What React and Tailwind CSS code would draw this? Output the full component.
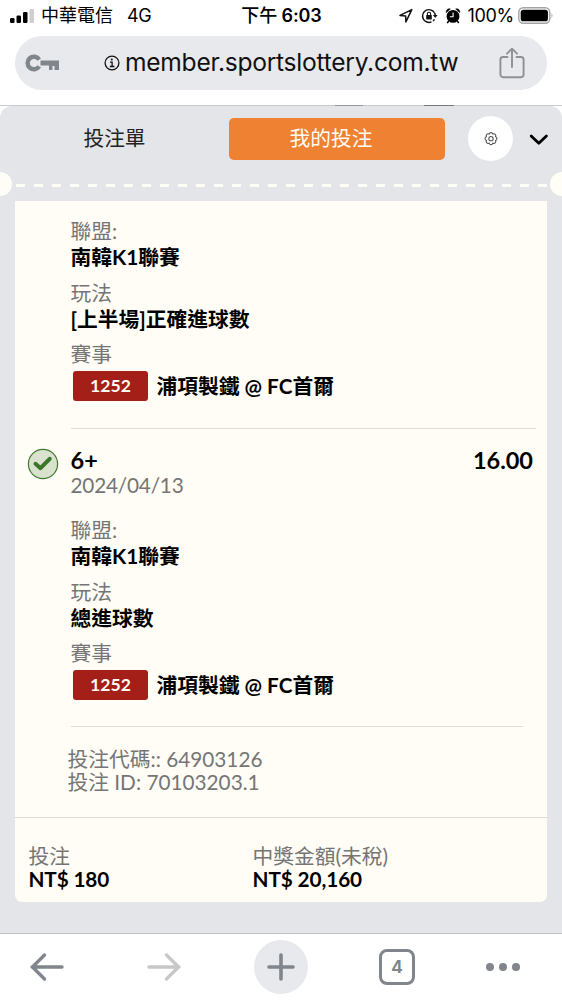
const selections = [
  { league: '南韓K1聯賽', play: '[上半場]正確進球數', code: '1252', match: '浦項製鐵 @ FC首爾' },
  {
    pick: '6+',
    odds: '16.00',
    date: '2024/04/13',
    league: '南韓K1聯賽',
    play: '總進球數',
    code: '1252',
    match: '浦項製鐵 @ FC首爾',
  },
];

function StatusBar() {
  return (
    <div className="h-9 grid grid-cols-[1fr_auto_1fr] items-start pt-[3px] pl-[9px] pr-2 text-black">
      <div className="flex items-center h-[25px]">
        <svg width="27" height="18" viewBox="0 0 27 18">
          <rect x="1" y="11" width="4.5" height="5" rx="1.2" />
          <rect x="7.5" y="8.5" width="4.5" height="7.5" rx="1.2" />
          <rect x="14" y="5" width="4.5" height="11" rx="1.2" />
          <rect x="20.5" y="2" width="4.5" height="14" rx="1.2" fill="#cfcfcf" />
        </svg>
        <span className="ml-[5px] text-[18px]">中華電信</span>
        <span className="ml-[14px] text-[18px] tracking-[-0.5px]">4G</span>
      </div>
      <div className="h-[25px] leading-[25px] text-[18px] font-semibold tracking-[-0.1px]">
        <span className="font-medium">下午</span> 6:03
      </div>
      <div className="flex items-center justify-end h-[25px]">
        <svg width="14" height="15" viewBox="0 0 14 15" fill="none" stroke="#111" strokeWidth="1.5" strokeLinejoin="round">
          <path d="M12.8 1.6 1 7.4l5.6.5.3 6z" />
        </svg>
        <svg className="ml-[8px]" width="17" height="16" viewBox="0 0 17 16" fill="none" stroke="#111" strokeWidth="1.4">
          <path d="M13.4 4.6A6.4 6.4 0 1 0 10.5 13.9" />
          <path d="M13.4 4.6A6.4 6.4 0 0 1 14.3 7.5M12 13a6.4 6.4 0 0 0 1.5-1.7" />
          <path d="M11.9 7h4.6l-2.3 3z" fill="#111" stroke="none" />
          <rect x="5.2" y="7" width="5.6" height="4.4" rx=".6" fill="#111" stroke="none" />
          <path d="M6.4 7.2V5.8a1.6 1.6 0 0 1 3.2 0v1.4" strokeWidth="1.1" />
        </svg>
        <svg className="ml-[7px]" width="16" height="16" viewBox="0 0 15 16">
          <circle cx="7.5" cy="8.4" r="6.4" />
          <path d="M.8 4.6A3 3 0 0 1 4.8 1zM14.2 4.6A3 3 0 0 0 10.2 1z" stroke="#000" strokeWidth=".6" />
          <path d="m3.2 12.8-1.4 2.4M11.8 12.8l1.4 2.4" stroke="#000" strokeWidth="1.6" />
          <path d="M7.6 4.6v4.2H4.4" fill="none" stroke="#fff" strokeWidth="1.1" />
        </svg>
        <span className="ml-[6px] text-[18px] tracking-[-0.3px]">100%</span>
        <svg className="ml-[4px] shrink-0" width="36" height="18" viewBox="0 0 36 18">
          <rect x=".8" y=".8" width="31" height="15.4" rx="4.5" fill="none" stroke="#a3a3a3" strokeWidth="1.4" />
          <rect x="2.7" y="2.7" width="27.2" height="11.6" rx="2.6" />
          <path d="M33.5 6q2 2.5 0 5z" fill="#a3a3a3" />
        </svg>
      </div>
    </div>
  );
}

function AddressBar() {
  return (
    <div className="mx-[15px] h-[54px] rounded-full bg-[#e8e9ed] flex items-center pl-[10px] pr-[22px]">
      <svg width="35" height="18" viewBox="0 0 35 18" fill="none" stroke="#80868b">
        <path d="M14.2 5.6A6.3 6.3 0 1 0 14.2 12.4" strokeWidth="4.4" />
        <path d="M15.5 6.5H34V16h-4.5v-4h-2v4H24v-4.5h-8.5z" fill="#80868b" stroke="none" />
      </svg>
      <svg className="ml-[44px]" width="16" height="16" viewBox="0 0 16 16" fill="none" stroke="#111" strokeWidth="1.3">
        <circle cx="8" cy="8" r="6.9" />
        <circle cx="7.8" cy="4.6" r="1" fill="#111" stroke="none" />
        <path d="M6 7.2h2.1v4.2M5.8 11.5h4.6" />
      </svg>
      <span className="ml-[5px] w-[340px] -mt-[2px] text-[24.6px] leading-[30px] tracking-[-0.27px] text-[#111] whitespace-nowrap">
        member.sportslottery.com.tw
      </span>
      <svg className="ml-auto shrink-0" width="26" height="32" viewBox="0 0 26 32" fill="none" stroke="#8d9196" strokeWidth="1.9" strokeLinecap="round" strokeLinejoin="round">
        <path d="M8.5 10H4a2.6 2.6 0 0 0-2.6 2.6v15A2.6 2.6 0 0 0 4 30.2h18a2.6 2.6 0 0 0 2.6-2.6v-15A2.6 2.6 0 0 0 22 10h-4.5" />
        <path d="M13 20V2M8 6.7 13 1.7l5 5" />
      </svg>
    </div>
  );
}

function Tabs() {
  return (
    <div className="flex items-center h-[45px] mt-[10px]">
      <button className="w-[229px] pt-px text-[20.7px] text-[#222]">投注單</button>
      <button className="w-[216px] h-[42px] pr-[12px] pt-px rounded-[5px] bg-[#ef8132] text-[20.7px] text-[#fffdf5]">
        我的投注
      </button>
      <button className="ml-[23px] size-[45px] rounded-full bg-white flex items-center justify-center">
        <svg width="14" height="14" viewBox="0 0 13 13" fill="none" stroke="#555" strokeWidth="1">
          <path d="M5.3 1q1.2-.8 2.4 0l.5.9 1.1-.3q1.4.3 1.7 1.7l-.3 1 .9.6q.8 1.200 0 2.400l-.9.6.3 1.100q-.3 1.400-1.700 1.700l-1.100-.3-.5.9q-1.200.8-2.400 0l-.5-.9-1.100.3Q2.300 10.400 2 9l.3-1.100-.9-.6q-.8-1.200 0-2.400l.9-.6-.3-1Q2.300 1.900 3.700 1.600l1.100.3z" />
          <circle cx="6.5" cy="6.2" r="2" />
        </svg>
      </button>
      <svg className="ml-[16px]" width="20" height="14" viewBox="0 0 20 14" fill="none" stroke="#000" strokeWidth="2.8">
        <path d="m2.2 4 7.6 7.3L17.4 4" strokeLinejoin="round" strokeLinecap="round" />
      </svg>
    </div>
  );
}

function Perforation() {
  return (
    <div className="mt-[11px] h-6 flex items-center justify-between">
      <div className="w-3 h-6 rounded-r-full bg-[#fffdf5]" />
      <div className="flex-1 ml-1 mr-[2px] mt-[2px] h-[3px] bg-[repeating-linear-gradient(90deg,#fffdf5_0_9px,transparent_9px_18px)]" />
      <div className="w-3 h-6 rounded-l-full bg-[#fffdf5]" />
    </div>
  );
}

function Field({ label, children }) {
  return (
    <div className="mb-[10px]">
      <div className="leading-[25px] text-[#757575]">{label}</div>
      <div className="pt-px leading-[25.5px] font-bold">{children}</div>
    </div>
  );
}

function Selection({ item }) {
  return (
    <div className="pl-[55.5px]">
      {item.pick && (
        <div className="relative pt-[18px] h-[89px]">
          <svg className="absolute -left-[43.5px] top-[19px]" width="32" height="32" viewBox="0 0 32 32" fill="none">
            <circle cx="16" cy="16" r="14.6" fill="#d8e2cc" stroke="#417a30" strokeWidth="1.2" />
            <path d="m8.500 15.800 5 4.400 9.200-9.400" stroke="#3a752a" strokeWidth="4" strokeLinecap="round" strokeLinejoin="round" />
          </svg>
          <div className="flex justify-between pr-[14px] text-[23.5px] leading-[26px] font-bold">
            <span>{item.pick}</span>
            <span>{item.odds}</span>
          </div>
          <div className="leading-[24px] tracking-[-0.2px] text-[#757575]">{item.date}</div>
        </div>
      )}
      <Field label="聯盟:">{item.league}</Field>
      <Field label="玩法">{item.play}</Field>
      <div className="leading-[25px] text-[#757575]">賽事</div>
      <div className="mt-[4px] ml-[2.5px] h-[30px] flex items-center">
        <span className="w-[75px] h-[30px] rounded-[3px] bg-[#a41f17] text-center text-[17.6px] leading-[30px] font-bold text-[#fffdf5]">
          {item.code}
        </span>
        <span className="ml-[8.5px] pt-[2px] font-bold">{item.match}</span>
      </div>
    </div>
  );
}

function BottomBar() {
  return (
    <div className="h-[67px] shrink-0 bg-white border-t border-[#bfc0c3] flex items-center">
      <svg className="ml-[29px]" width="36" height="30" viewBox="0 0 36 30" fill="none" stroke="#80868b" strokeWidth="3.4" strokeLinecap="round" strokeLinejoin="round">
        <path d="M33 15H3M15.5 3 3.5 15l12 12" />
      </svg>
      <svg className="ml-[81px]" width="36" height="30" viewBox="0 0 36 30" fill="none" stroke="#c8c8c8" strokeWidth="3.4" strokeLinecap="round" strokeLinejoin="round">
        <path d="M3 15h30M20.5 3l12 12-12 12" />
      </svg>
      <div className="ml-[72px] size-[54px] rounded-full bg-[#e8e9ed] flex items-center justify-center">
        <svg width="28" height="28" viewBox="0 0 28 28" stroke="#80868b" strokeWidth="3.6" strokeLinecap="round">
          <path d="M14 2v24M2 14h24" />
        </svg>
      </div>
      <div className="ml-[71px] size-[36px] pt-px rounded-[8px] border-3 border-[#80868b] text-[#80868b] text-[17px] font-bold flex items-center justify-center">
        4
      </div>
      <svg className="ml-[70px]" width="36" height="10" viewBox="0 0 36 10" fill="#80868b">
        <circle cx="5" cy="5" r="4" />
        <circle cx="18" cy="5" r="4" />
        <circle cx="31" cy="5" r="4" />
      </svg>
    </div>
  );
}

export default function App() {
  return (
    <div className="w-[562px] h-[1000px] overflow-hidden flex flex-col bg-white font-['Inter','Noto_Sans_CJK_TC',sans-serif]">
      <StatusBar />
      <AddressBar />
      <div className="mt-[15px] h-px shrink-0 bg-[#c9cacc] flex">
        <div className="ml-[335px] w-7 bg-[#96979a]" />
        <div className="ml-[61px] w-[30px] bg-[#77787b]" />
      </div>
      <main className="flex-1 min-h-0 rounded-t-[12px] bg-[#e4e5e8] text-[20.75px] text-black font-['Lato','Noto_Sans_CJK_TC',sans-serif]">
        <Tabs />
        <Perforation />
        <div className="mx-[15px] mt-[5px] h-[701px] rounded-b-[7px] bg-[#fffdf6] flex flex-col">
          <div className="h-[227px] pt-[18px]">
            <Selection item={selections[0]} />
          </div>
          <hr className="ml-[56px] mr-[11px] border-[#dfddd6]" />
          <div className="h-[297px]">
            <Selection item={selections[1]} />
          </div>
          <hr className="ml-[56px] mr-[24px] border-[#dfddd6]" />
          <div className="h-[90px] pl-[52.5px] pt-[21px] leading-[22.5px] text-[#757575]">
            <div>投注代碼:: 64903126</div>
            <div>投注 ID: 70103203.1</div>
          </div>
          <hr className="border-[#dcdad5]" />
          <div className="grid grid-cols-[224px_1fr] pl-[13.5px] pt-[27px] leading-[22.5px]">
            <div>
              <div className="text-[#757575]">投注</div>
              <div className="font-bold tracking-[-0.15px]">NT$ 180</div>
            </div>
            <div>
              <div className="text-[#757575]">中獎金額(未稅)</div>
              <div className="font-bold tracking-[-0.1px]">NT$ 20,160</div>
            </div>
          </div>
        </div>
      </main>
      <BottomBar />
    </div>
  );
}
